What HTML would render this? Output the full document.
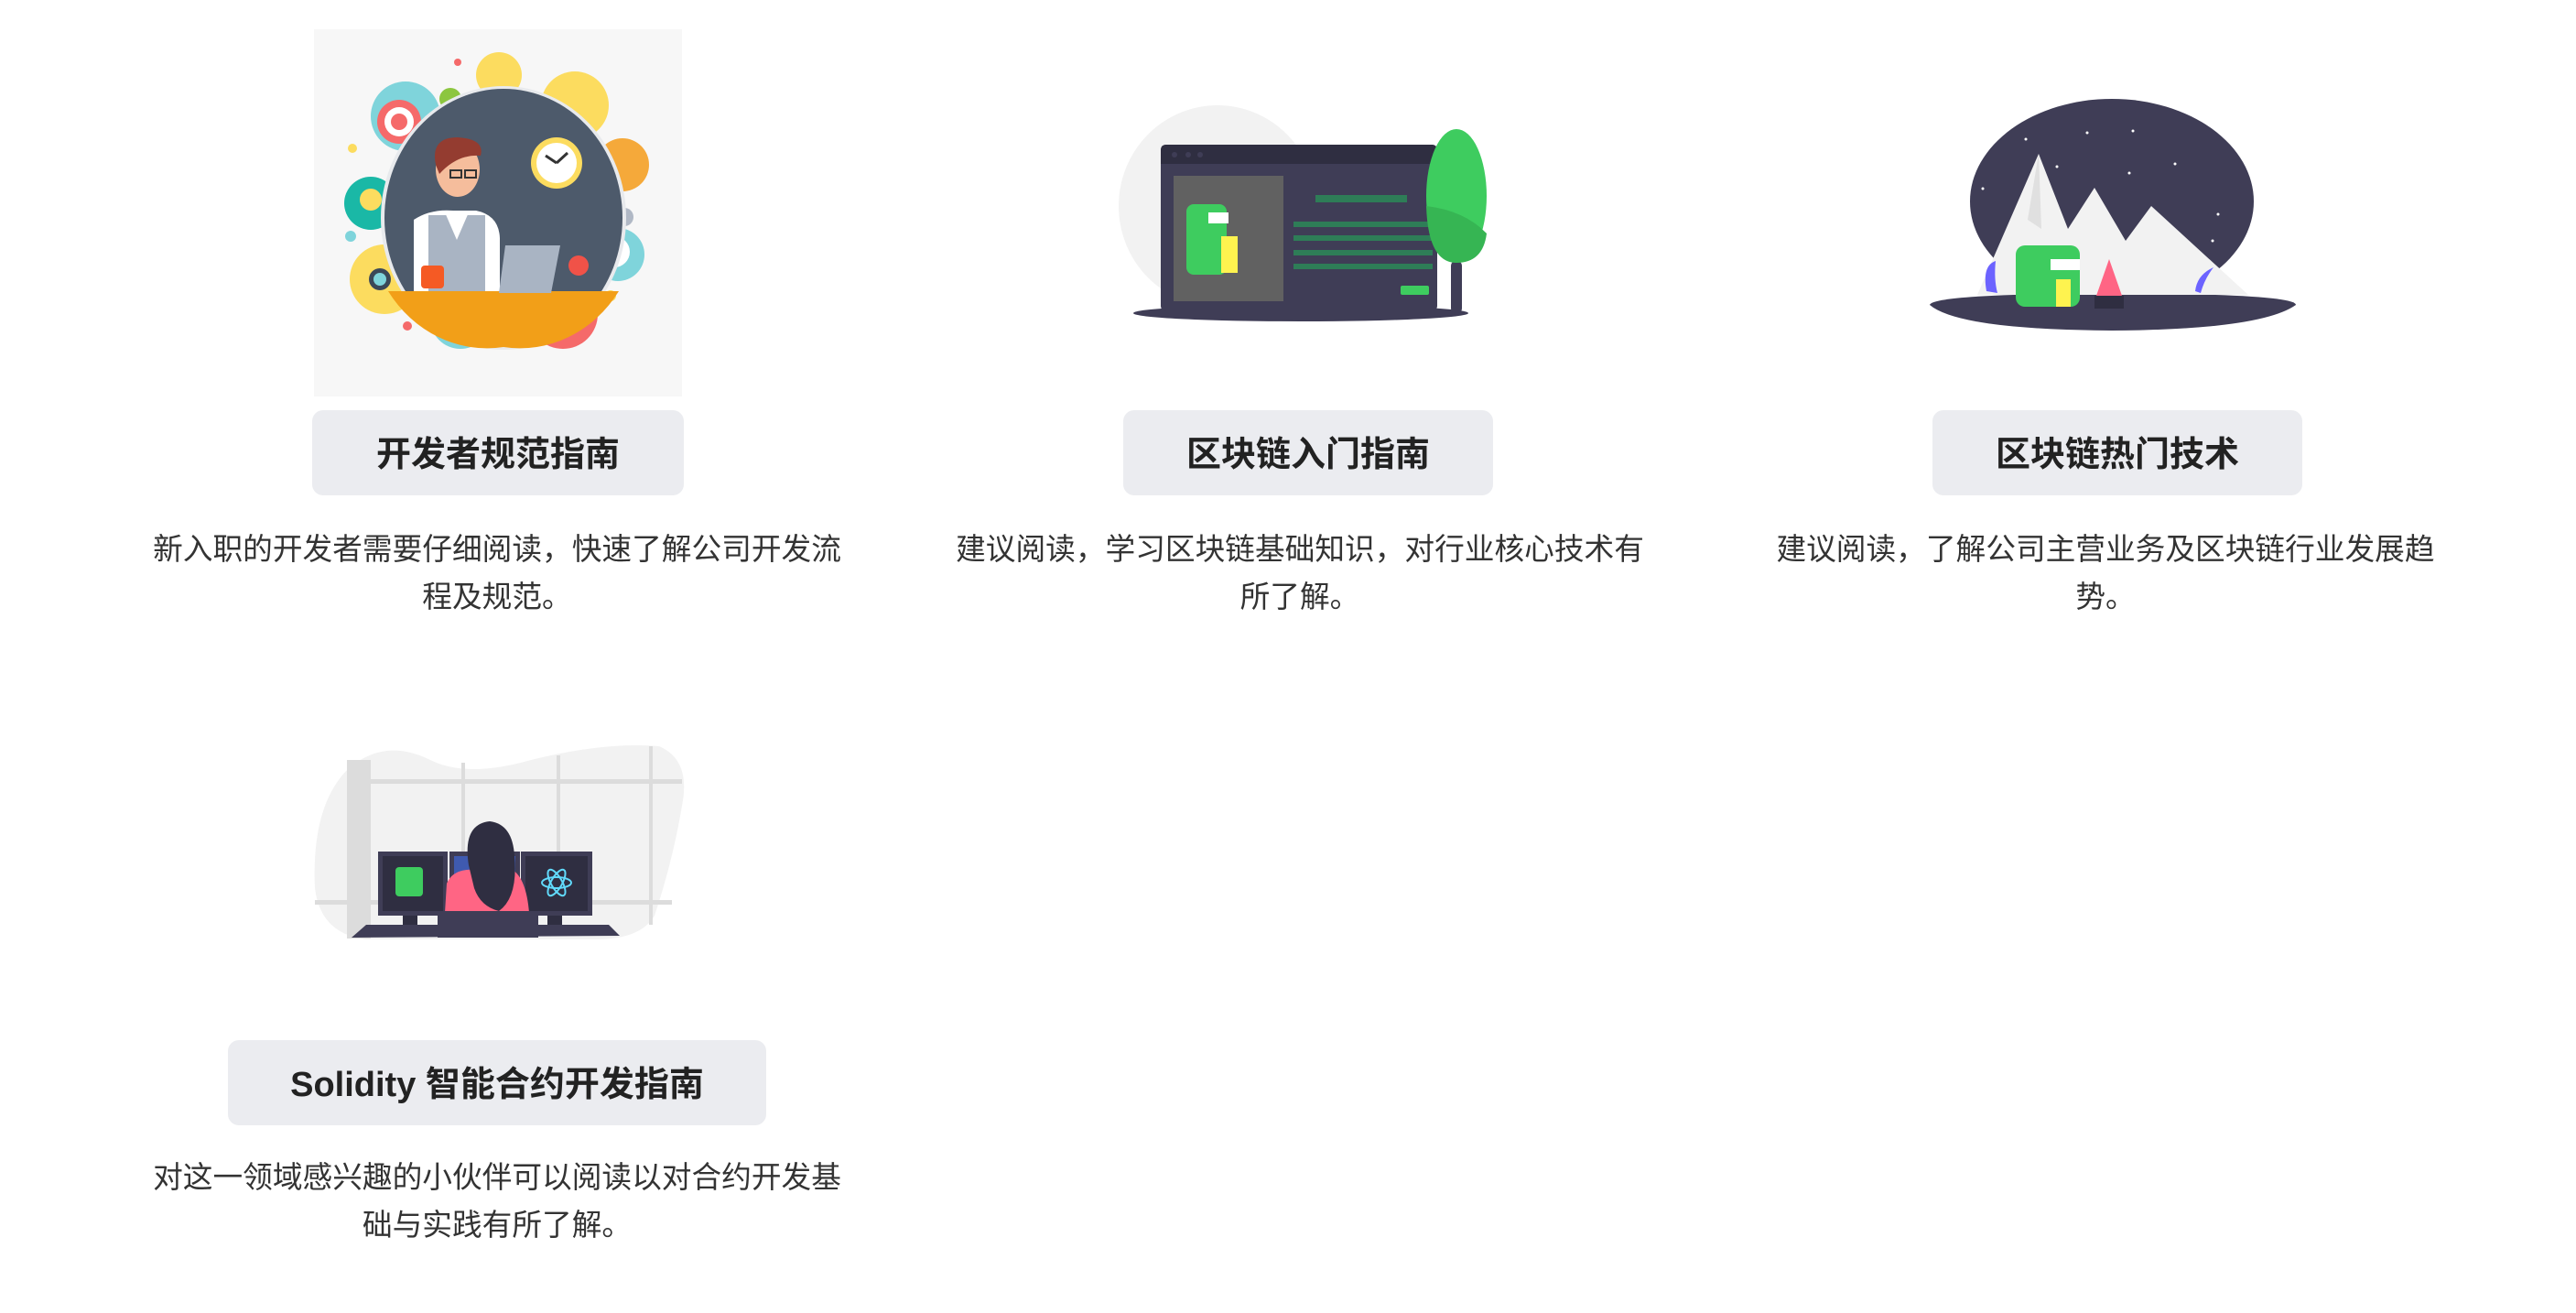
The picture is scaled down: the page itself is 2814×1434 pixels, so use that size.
<!DOCTYPE html>
<html><head><meta charset="utf-8">
<style>
html,body{margin:0;padding:0;background:#fff;}
body{width:2814px;height:1434px;position:relative;overflow:hidden;font-family:"Liberation Sans","Noto Sans CJK SC",sans-serif;}
.btn{position:absolute;height:93px;line-height:99px;background:#ebecf0;border-radius:12px;text-align:center;font-weight:bold;font-size:38px;color:#222;}
.desc{position:absolute;width:800px;text-align:center;font-size:32.7px;line-height:52px;color:#333;}
svg{position:absolute;left:0;top:0;}
</style></head><body>
<svg width="2814" height="1434" viewBox="0 0 2814 1434">
<!-- card1 -->
<rect x="343" y="32" width="402" height="401" fill="#f7f7f7"/>
<circle cx="443" cy="127" r="38" fill="#7fd4db"/>
<circle cx="436" cy="133" r="24" fill="#f56a6a"/><circle cx="436" cy="133" r="16" fill="#fff"/><circle cx="436" cy="133" r="9" fill="#f56a6a"/>
<circle cx="545" cy="82" r="25" fill="#fcdc5f"/>
<circle cx="628" cy="115" r="37" fill="#fcdc5f"/>
<circle cx="680" cy="180" r="29" fill="#f5a93a"/>
<circle cx="405" cy="222" r="29" fill="#1ab8a6"/><circle cx="405" cy="218" r="12" fill="#fcdc5f"/>
<circle cx="420" cy="305" r="38" fill="#fcdc5f"/><circle cx="415" cy="305" r="12" fill="#3b4858"/><circle cx="415" cy="305" r="7" fill="#7fd4db"/>
<circle cx="675" cy="278" r="29" fill="#7fd4db"/><circle cx="671" cy="275" r="17" fill="#fff"/>
<circle cx="503" cy="348" r="33" fill="#7fd4db"/>
<circle cx="615" cy="343" r="38" fill="#f56a6a"/>
<circle cx="492" cy="108" r="12" fill="#8cc63f"/>
<circle cx="682" cy="237" r="10" fill="#b0b8c5"/>
<circle cx="385" cy="162" r="5" fill="#fcdc5f"/><circle cx="383" cy="258" r="6" fill="#7fd4db"/>
<circle cx="445" cy="356" r="5" fill="#f56a6a"/><circle cx="667" cy="323" r="6" fill="#fcdc5f"/>
<circle cx="561" cy="363" r="5" fill="#1ab8a6"/><circle cx="500" cy="68" r="4" fill="#f56a6a"/>
<ellipse cx="550" cy="238" rx="134" ry="144" fill="#e8eaed"/>
<ellipse cx="550" cy="238" rx="130" ry="141" fill="#4d5a6b"/>
<path d="M424 318 L676 318 A130 141 0 0 1 550 379 A130 141 0 0 1 424 318Z" fill="#f29f18"/>
<circle cx="608" cy="178" r="28" fill="#fcdc5f"/><circle cx="608" cy="178" r="22" fill="#fff"/>
<path d="M608 178 L596 170 M608 178 L620 167" stroke="#333" stroke-width="3"/>
<path d="M452 300 L452 240 Q470 228 495 230 L520 230 Q545 235 546 260 L546 318 L452 318Z" fill="#fff"/>
<path d="M468 235 L530 235 L530 318 L468 318Z" fill="#a9b4c3"/>
<path d="M486 232 L512 232 L499 262Z" fill="#fff"/>
<ellipse cx="500" cy="185" rx="24" ry="30" fill="#f5bd9c"/>
<path d="M476 180 Q470 150 500 150 Q530 152 525 170 Q500 168 480 190Z" fill="#943c30"/>
<rect x="492" y="186" width="12" height="8" fill="none" stroke="#333" stroke-width="2"/><rect x="508" y="186" width="12" height="8" fill="none" stroke="#333" stroke-width="2"/>
<path d="M552 268 L612 268 L602 320 L545 320Z" fill="#a9b4c3"/>
<rect x="460" y="290" width="25" height="25" rx="4" fill="#f55a24"/>
<circle cx="632" cy="290" r="11" fill="#f05248"/>
<!-- card2 -->
<ellipse cx="1330" cy="225" rx="108" ry="110" fill="#f2f2f2"/>
<ellipse cx="1421" cy="342" rx="183" ry="9" fill="#3f3d56"/>
<rect x="1268" y="158" width="302" height="182" rx="6" fill="#3f3d56"/>
<path d="M1274 158 L1564 158 Q1570 158 1570 164 L1570 179 L1268 179 L1268 164 Q1268 158 1274 158Z" fill="#2f2e41"/>
<circle cx="1283" cy="169" r="3" fill="#3f3d56"/><circle cx="1298" cy="169" r="3" fill="#3f3d56"/><circle cx="1311" cy="169" r="3" fill="#3f3d56"/>
<rect x="1282" y="192" width="120" height="137" fill="#616161"/>
<rect x="1296" y="223" width="44" height="77" rx="8" fill="#3ecc5f"/>
<rect x="1320" y="232" width="22" height="12" fill="#fff"/>
<rect x="1334" y="258" width="18" height="40" fill="#fef34f"/>
<rect x="1437" y="213" width="100" height="8" fill="#2e7d57"/>
<rect x="1413" y="242" width="152" height="6" fill="#2e7d57"/>
<rect x="1413" y="257" width="152" height="6" fill="#2e7d57"/>
<rect x="1413" y="273" width="152" height="6" fill="#2e7d57"/>
<rect x="1413" y="288" width="152" height="6" fill="#2e7d57"/>
<rect x="1530" y="312" width="31" height="10" rx="2" fill="#3ecc5f"/>
<rect x="1585" y="285" width="12" height="57" rx="5" fill="#3f3d56"/>
<ellipse cx="1591" cy="214" rx="33" ry="73" fill="#3ecc5f"/>
<path d="M1558 225 Q1600 230 1624 255 Q1620 287 1591 287 Q1560 287 1558 225Z" fill="#36b553"/>
<!-- card3 -->
<ellipse cx="2307" cy="220" rx="155" ry="112" fill="#3f3d56"/>
<polygon points="2160,322 2227,168 2259,250 2288,205 2322,263 2350,225 2456,322" fill="#f2f2f2"/>
<polygon points="2227,168 2215,240 2230,250" fill="#e0e0e0"/>
<path d="M2108 333 Q2110 325 2200 322 L2420 322 Q2508 325 2508 333 Q2470 360 2307 361 Q2140 360 2108 333Z" fill="#3f3d56"/>
<g fill="#fff"><circle cx="2213" cy="152" r="1.5"/><circle cx="2280" cy="145" r="1.5"/><circle cx="2330" cy="143" r="1.5"/><circle cx="2247" cy="182" r="1.5"/><circle cx="2376" cy="179" r="1.5"/><circle cx="2326" cy="189" r="1.5"/><circle cx="2166" cy="206" r="1.5"/><circle cx="2423" cy="234" r="1.5"/><circle cx="2417" cy="263" r="1.5"/></g>
<path d="M2170 318 Q2165 290 2180 285 Q2178 305 2182 320Z" fill="#6c63ff"/>
<path d="M2398 318 Q2400 300 2418 292 Q2408 305 2404 320Z" fill="#6c63ff"/>
<rect x="2202" y="268" width="70" height="67" rx="10" fill="#3ecc5f"/>
<rect x="2240" y="283" width="32" height="12" fill="#fff"/>
<rect x="2246" y="305" width="16" height="30" fill="#fef34f"/>
<path d="M2304 283 L2318 323 L2290 323Z" fill="#ff6584"/>
<rect x="2288" y="323" width="32" height="14" fill="#2f2e41"/>
<!-- card4 -->
<path d="M344 970 Q340 880 380 840 Q420 805 470 830 Q510 850 580 830 Q660 810 720 815 Q755 830 745 880 Q735 940 715 1000 Q700 1026 650 1026 L400 1026 Q350 1020 344 970Z" fill="#f2f2f2"/>
<g fill="#dcdcdc"><rect x="380" y="851" width="365" height="5"/><rect x="344" y="983" width="390" height="5"/><rect x="504" y="833" width="4" height="185"/><rect x="608" y="825" width="4" height="190"/><rect x="709" y="815" width="4" height="195"/><rect x="379" y="830" width="26" height="195"/></g>
<rect x="413" y="930" width="76" height="70" fill="#3f3d56"/><rect x="418" y="935" width="66" height="60" fill="#2f2e41"/>
<rect x="432" y="947" width="30" height="32" rx="4" fill="#3ecc5f"/>
<rect x="491" y="930" width="77" height="70" fill="#3f3d56"/><rect x="496" y="935" width="67" height="60" fill="#3f5ab0"/>
<rect x="569" y="930" width="78" height="70" fill="#3f3d56"/><rect x="574" y="935" width="68" height="60" fill="#2f2e41"/>
<g fill="none" stroke="#61dafb" stroke-width="2"><ellipse cx="608" cy="964" rx="16" ry="6"/><ellipse cx="608" cy="964" rx="16" ry="6" transform="rotate(60 608 964)"/><ellipse cx="608" cy="964" rx="16" ry="6" transform="rotate(-60 608 964)"/></g>
<rect x="440" y="1000" width="16" height="10" fill="#2f2e41"/><rect x="598" y="1000" width="16" height="10" fill="#2f2e41"/>
<polygon points="400,1010 665,1010 677,1022 384,1024" fill="#3f3d56"/>
<path d="M488 965 Q495 948 520 950 L560 950 Q575 960 578 997 L486 997Z" fill="#ff6584"/>
<path d="M512 945 Q505 900 535 897 Q560 900 562 935 Q566 980 545 995 Q525 990 518 970Z" fill="#2f2e41"/>
<rect x="478" y="995" width="110" height="29" fill="#3f3d56"/>
</svg>

<div class="btn" style="left:341px;top:448px;width:406px;">开发者规范指南</div>
<div class="desc" style="left:143px;top:574px;">新入职的开发者需要仔细阅读，快速了解公司开发流<br>程及规范。</div>

<div class="btn" style="left:1227px;top:448px;width:404px;">区块链入门指南</div>
<div class="desc" style="left:1020px;top:574px;">建议阅读，学习区块链基础知识，对行业核心技术有<br>所了解。</div>

<div class="btn" style="left:2111px;top:448px;width:404px;">区块链热门技术</div>
<div class="desc" style="left:1900px;top:574px;">建议阅读，了解公司主营业务及区块链行业发展趋<br>势。</div>

<div class="btn" style="left:249px;top:1136px;width:588px;">Solidity 智能合约开发指南</div>
<div class="desc" style="left:143px;top:1260px;">对这一领域感兴趣的小伙伴可以阅读以对合约开发基<br>础与实践有所了解。</div>
</body></html>
